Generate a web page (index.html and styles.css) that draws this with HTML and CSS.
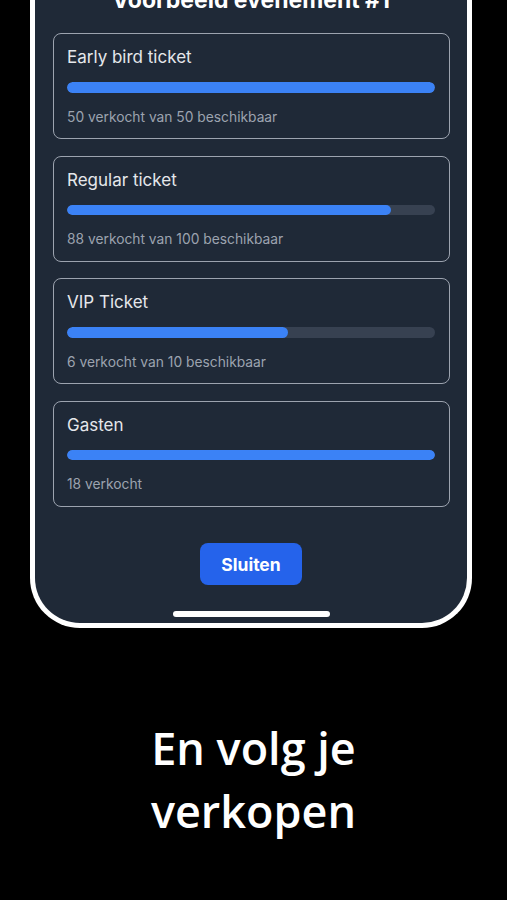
FILE: index.html
```html
<!DOCTYPE html>
<html lang="nl">

<head>
    <meta charset="utf-8">
    <meta name="viewport" content="width=device-width, initial-scale=1.0">
    <title>Verkopen</title>
    <link rel="stylesheet" href="styles.css">
</head>

<body>
    <section class="telefoon">
        <div class="scherm">
            <h1>Voorbeeld evenement #1</h1>

            <div class="tickets">
                <article class="ticket">
                    <h2>Early bird ticket</h2>
                    <div class="balk"><div class="vulling" style="width: 100%"></div></div>
                    <p>50 verkocht van 50 beschikbaar</p>
                </article>
                <article class="ticket">
                    <h2>Regular ticket</h2>
                    <div class="balk"><div class="vulling" style="width: 88%"></div></div>
                    <p>88 verkocht van 100 beschikbaar</p>
                </article>
                <article class="ticket">
                    <h2>VIP Ticket</h2>
                    <div class="balk"><div class="vulling" style="width: 60%"></div></div>
                    <p>6 verkocht van 10 beschikbaar</p>
                </article>
                <article class="ticket">
                    <h2>Gasten</h2>
                    <div class="balk"><div class="vulling" style="width: 100%"></div></div>
                    <p>18 verkocht</p>
                </article>
            </div>

            <button class="sluiten">Sluiten</button>
            <div class="home"></div>
        </div>
    </section>

    <h3 class="tekst">En volg je<br>verkopen</h3>
</body></html>
```

FILE: styles.css
```css
body {
    margin: 0;
    background-color: #000;
    overflow: hidden;
    font-family: Inter, "Liberation Sans", sans-serif;
}

.telefoon {
    width: 442px;
    margin-left: 30px;
    border: 5px solid #fff;
    border-top: none;
    border-radius: 0 0 50px 50px;
    background-color: #1f2937;
    box-sizing: border-box;
    overflow: hidden;
}

.scherm {
    padding: 0 17.5px 6px;
    display: flex;
    flex-direction: column;
    align-items: center;
}

h1 {
    margin: -14px 0 19px;
    font-size: 23px;
    line-height: 28px;
    font-weight: 700;
    color: #fff;
}

.tickets {
    width: 100%;
    display: flex;
    flex-direction: column;
    gap: 16.5px;
}

.ticket {
    border: 1.5px solid #9ca3af;
    border-radius: 8px;
    padding: 11px 13.5px 11.5px;
}

.ticket h2 {
    margin: 0;
    font-size: 17px;
    line-height: 24px;
    font-weight: 400;
    color: #e5e7eb;
}

.balk {
    height: 10.5px;
    margin: 13px 0 14px;
    border-radius: 6px;
    background-color: #374151;
    overflow: hidden;
}

.vulling {
    height: 100%;
    border-radius: 6px;
    background-color: #3b82f6;
}

.ticket p {
    margin: 0;
    font-size: 13.8px;
    line-height: 20px;
    color: #9ca3af;
}

.sluiten {
    margin-top: 36.5px;
    width: 102px;
    height: 42px;
    border: none;
    border-radius: 8px;
    background-color: #2563eb;
    color: #fff;
    font-family: inherit;
    font-size: 17.5px;
    font-weight: 700;
}

.home {
    margin-top: 26px;
    width: 157px;
    height: 5.5px;
    border-radius: 3px;
    background-color: #fff;
}

.tekst {
    margin: 88px 0 0;
    text-align: center;
    font-family: "Open Sans", sans-serif;
    font-size: 45px;
    line-height: 63px;
    font-weight: 600;
    color: #fff;
}
```
